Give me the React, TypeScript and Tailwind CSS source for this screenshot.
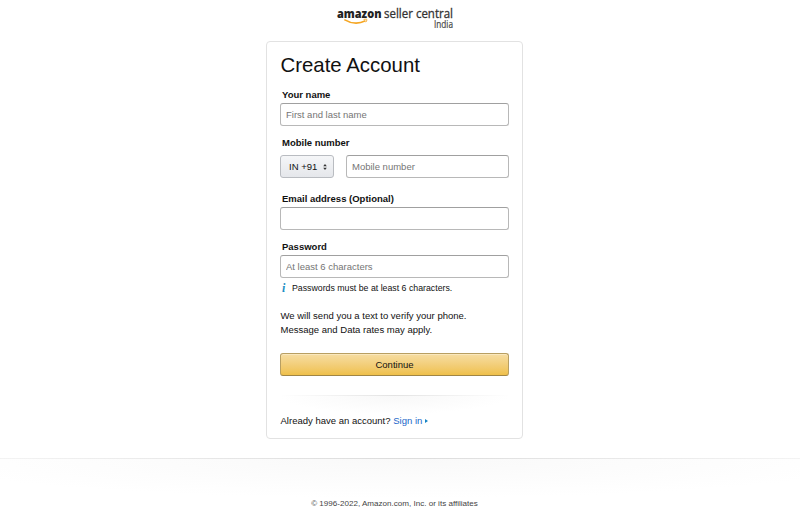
import React from 'react';
import type { ReactNode } from 'react';

const FIELD = 'block h-[23px] w-full rounded-[3px] border border-[#b8b8b8] border-t-[#a0a0a0] bg-white px-[5px] text-[9.5px] leading-none text-[#111] outline-none placeholder:text-[#757575]';

interface FieldProps {
	label: string;
	className?: string;
	children: ReactNode;
}

function Field({ label, className, children }: FieldProps) {
	return (
		<div className={className}>
			<label className="block h-[15px] pl-[2px] text-[9.5px] leading-[14px] font-bold">{label}</label>
			{children}
		</div>
	);
}

function Logo() {
	return (
		<svg className="ml-[330px] block h-[41px] w-[130px]" viewBox="330 0 130 41" fontFamily="Open Sans, sans-serif">
			<text x="337" y="17.5" fontSize="12" fontWeight="800" fill="#222" textLength="44.5" lengthAdjust="spacingAndGlyphs">amazon</text>
			<text x="384" y="17.5" fontSize="12.5" fill="#333" stroke="#333" strokeWidth="0.3" textLength="69" lengthAdjust="spacingAndGlyphs">seller central</text>
			<text x="434" y="27.5" fontSize="10.2" fill="#444" stroke="#444" strokeWidth="0.2" textLength="19" lengthAdjust="spacingAndGlyphs">India</text>
			<path d="M344.3 19.6Q355 26 365.5 20.8" fill="none" stroke="#f5a623" strokeWidth="1.6" />
			<path d="M363.6 19.4Q367.2 18.7 367 19.6Q366.8 21.2 365.7 22.2" fill="none" stroke="#f5a623" strokeWidth="0.9" />
		</svg>
	);
}

export default function App() {
	return (
		<div className="h-[516px] w-[800px] overflow-hidden bg-white font-['Liberation_Sans',Arial,sans-serif] text-[9.53px] text-[#111]">
			<Logo />

			{/* Registration card */}
			<main className="ml-[266px] h-[398px] w-[257px] rounded-[4px] border border-[#e2e2e2] px-[13px]">
				<h1 className="pt-[9px] pl-[0.5px] text-[20.4px] leading-[28px]">Create Account</h1>

				<Field label="Your name" className="mt-[9px]">
					<input className={FIELD} placeholder="First and last name" />
				</Field>

				<Field label="Mobile number" className="mt-[10px]">
					<div className="flex gap-[12px] pt-[4px]">
						<button className="flex h-[23px] w-[54px] shrink-0 items-center justify-between rounded-[3px] border border-[#b9bcc1] bg-linear-to-b from-[#f5f6f8] to-[#e5e7eb] pt-px pr-[6.5px] pl-[8px]">
							<span>IN +91</span>
							<svg className="h-[6px] w-[4px]" viewBox="0 0 4 6" fill="#333">
								<path d="M2 0 3.8 2.2H.2zM2 6 .2 3.8H3.8z" />
							</svg>
						</button>
						<input className={FIELD} placeholder="Mobile number" />
					</div>
				</Field>

				<Field label="Email address (Optional)" className="mt-[14px]">
					<input className={FIELD} />
				</Field>

				<Field label="Password" className="mt-[10px]">
					<input className={FIELD} placeholder="At least 6 characters" />
				</Field>

				<div className="mt-[4px] flex h-[12px] pl-[2px] text-[8.78px] leading-[12px]">
					<span className="w-[10px] font-['Liberation_Serif',serif] text-[12px] font-bold text-[#1c8fc4] italic">i</span>
					<span>Passwords must be at least 6 characters.</span>
				</div>

				<p className="mt-[15px] pl-[0.5px] leading-[14px]">
					We will send you a text to verify your phone.
					<br />
					Message and Data rates may apply.
				</p>

				<button className="mt-[16px] block h-[23px] w-full rounded-[3px] border border-[#b89f62] border-b-[#a08545] bg-linear-to-b from-[#f6dda2] to-[#efc04a] pt-[2px] shadow-[inset_0_1px_0_#fae8be]">
					Continue
				</button>

				<div className="mt-[19px] h-px bg-linear-to-r from-white via-[#e3e3e3] to-white" />
				<div className="h-[18px] bg-[radial-gradient(ellipse_50%_100%_at_50%_0%,#f8f8f8,#ffffff)]" />

				<p className="pl-[0.5px] leading-[14px]">
					Already have an account? <a href="#" className="text-[#1a66c9]">Sign in</a>
					<svg className="ml-[3px] inline-block h-[4px] w-[3px] align-[1.5px]" viewBox="0 0 3 4" fill="#1583c5">
						<path d="M0 0 3 2 0 4z" />
					</svg>
				</p>
			</main>

			<footer className="mt-[19px]">
				<div className="h-px bg-linear-to-r from-[#f3f3f3] via-[#dcdcdc] to-[#f3f3f3]" />
				<div className="h-[39px] bg-[radial-gradient(ellipse_60%_100%_at_50%_0%,#f9f9f9,#ffffff)]" />
				<p className="pr-[11px] text-center text-[8.07px] leading-[12px] text-[#444]">
					© 1996-2022, Amazon.com, Inc. or its affiliates
				</p>
			</footer>
		</div>
	);
}
